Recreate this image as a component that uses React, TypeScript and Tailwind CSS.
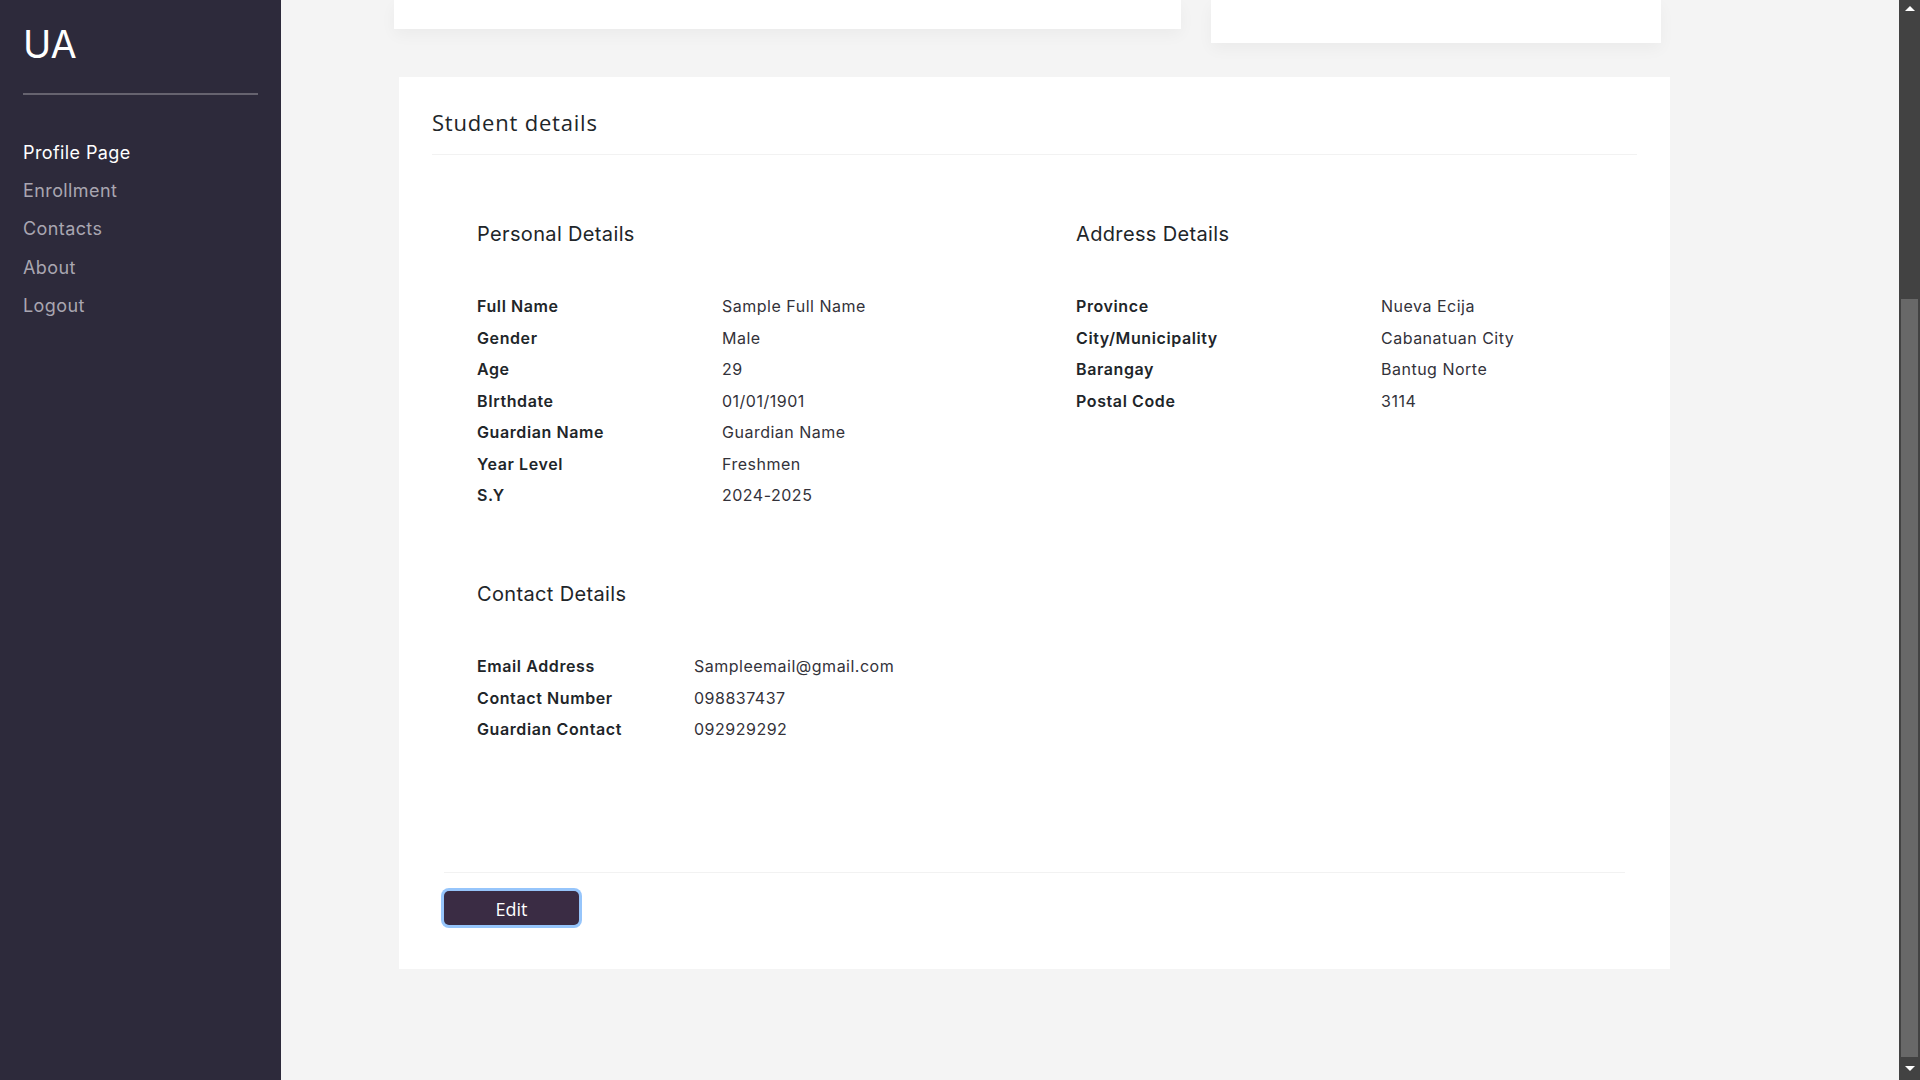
import { type ReactNode } from "react";

const NAV = ["Profile Page", "Enrollment", "Contacts", "About", "Logout"];

const PERSONAL: [string, string][] = [
  ["Full Name", "Sample Full Name"],
  ["Gender", "Male"],
  ["Age", "29"],
  ["BIrthdate", "01/01/1901"],
  ["Guardian Name", "Guardian Name"],
  ["Year Level", "Freshmen"],
  ["S.Y", "2024-2025"],
];

const ADDRESS: [string, string][] = [
  ["Province", "Nueva Ecija"],
  ["City/Municipality", "Cabanatuan City"],
  ["Barangay", "Bantug Norte"],
  ["Postal Code", "3114"],
];

const CONTACT: [string, string][] = [
  ["Email Address", "Sampleemail@gmail.com"],
  ["Contact Number", "098837437"],
  ["Guardian Contact", "092929292"],
];

function Sidebar() {
  return (
    <aside className="flex h-screen w-[281px] shrink-0 flex-col bg-[#2d2a3b] px-[23px] font-['Inter',sans-serif]">
      <div className="pt-[22px] text-[38px] leading-[44px] font-normal text-white">UA</div>
      <hr className="mt-[27px] border-0 border-t-[2px] border-[#66636f]" />
      <nav className="mt-[39px] flex flex-col">
        {NAV.map((item, i) => (
          <a
            key={item}
            className={`text-[18px] leading-[38.2px] tracking-[0.4px] ${i === 0 ? "text-white" : "text-[#a9a6b1]"}`}
          >
            {item}
          </a>
        ))}
      </nav>
    </aside>
  );
}

function Section({
  title,
  rows,
  labelWidth,
  className = "",
}: {
  title: string;
  rows: [string, string][];
  labelWidth: string;
  className?: string;
}) {
  return (
    <div className={className}>
      <h3 className="text-[20px] leading-[30px] font-normal tracking-[0.35px] text-[#212529]">{title}</h3>
      <table className="mt-[42px] border-collapse">
        <tbody>
          {rows.map(([k, v]) => (
            <tr key={k} className="text-[16px] leading-[31.5px]">
              <td className={`${labelWidth} p-0 font-semibold tracking-[0.6px] text-[#212529]`}>{k}</td>
              <td className="p-0 tracking-[0.5px] text-[#33323a]">{v}</td>
            </tr>
          ))}
        </tbody>
      </table>
    </div>
  );
}

function Card({ children, className = "" }: { children?: ReactNode; className?: string }) {
  return <div className={`bg-white shadow-[0_6px_16px_rgba(0,0,0,0.04)] ${className}`}>{children}</div>;
}

function Scrollbar() {
  return (
    <div className="flex h-screen w-[21px] shrink-0 flex-col bg-[#424242]">
      <div className="flex h-[17px] items-center justify-center">
        <div className="h-0 w-0 border-x-[5px] border-b-[5px] border-x-transparent border-b-white" />
      </div>
      <div className="mt-[282px] ml-[2px] h-[758px] w-[17px] bg-[#686868]" />
      <div className="flex flex-1 items-center justify-center">
        <div className="h-0 w-0 border-x-[5px] border-t-[5px] border-x-transparent border-t-white" />
      </div>
    </div>
  );
}

export default function App() {
  return (
    <div className="flex h-screen w-full overflow-hidden bg-[#f4f4f4]">
      <Sidebar />
      <main className="flex-1 overflow-hidden font-['Inter',sans-serif]">
        <div className="flex items-start gap-[30px] pl-[113px]">
          <Card className="h-[29px] w-[787px]" />
          <Card className="h-[43px] w-[450px]" />
        </div>
        <div className="ml-[118px] mt-[34px] w-[1271px] bg-white">
          <div className="px-[33px] pt-[30px]">
            <h2 className="border-b border-[#f2f2f2] pb-[16px] font-['Open_Sans',sans-serif] text-[22px] leading-[31px] font-normal tracking-[0.8px] text-[#212529]">
              Student details
            </h2>
          </div>
          <div className="px-[78px] pt-[64px]">
            <div className="flex">
              <Section title="Personal Details" rows={PERSONAL} labelWidth="w-[245px]" className="w-[599px]" />
              <Section title="Address Details" rows={ADDRESS} labelWidth="w-[305px]" />
            </div>
            <Section title="Contact Details" rows={CONTACT} labelWidth="w-[217px]" className="mt-[67.5px]" />
          </div>
          <div className="mx-[45px] mt-[126.5px] border-t border-[#f2f2f2] pt-[18px] pb-[44px]">
            <button className="h-[34px] w-[135px] rounded-[5px] bg-[#3a2c44] pt-[2px] font-['Open_Sans',sans-serif] text-[18px] leading-[28px] text-white ring-[3px] ring-[#96c5fb]">
              Edit
            </button>
          </div>
        </div>
      </main>
      <Scrollbar />
    </div>
  );
}
